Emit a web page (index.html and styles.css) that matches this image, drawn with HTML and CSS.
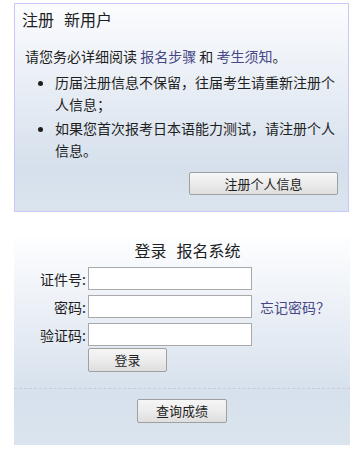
FILE: index.html
```html
<!DOCTYPE html>
<html lang="zh">
<head>
<meta charset="utf-8">
<link rel="stylesheet" href="styles.css">
</head>
<body>
<div class="page">
  <div class="reg-box">
    <h2 class="reg-title"><span class="gap">注册</span>新用户</h2>
    <p class="intro">请您务必详细阅读 <a class="link" href="#">报名步骤</a> 和 <a class="link" href="#">考生须知</a>。</p>
    <ul class="notes">
      <li>历届注册信息不保留，往届考生请重新注册个人信息；</li>
      <li>如果您首次报考日本语能力测试，请注册个人信息。</li>
    </ul>
    <div class="reg-actions">
      <button class="btn btn-reg" type="button">注册个人信息</button>
    </div>
  </div>

  <div class="login-box">
    <h2 class="login-title"><span class="gap">登录</span>报名系统</h2>
    <div class="form">
      <label class="lbl">证件号:</label>
      <input class="field" type="text">
      <span></span>
      <label class="lbl">密码:</label>
      <input class="field" type="password">
      <a class="link forgot" href="#">忘记密码？</a>
      <label class="lbl">验证码:</label>
      <input class="field" type="text">
      <span></span>
      <span></span>
      <div class="login-actions"><button class="btn btn-login" type="button">登录</button></div>
      <span></span>
    </div>
    <div class="divider"></div>
    <div class="query-actions">
      <button class="btn btn-query" type="button">查询成绩</button>
    </div>
  </div>
</div>
</body>
</html>
```
FILE: styles.css
```css
* { box-sizing: border-box; }
body {
  margin: 0;
  background: #fff;
  font-family: "Noto Sans CJK SC", "Noto Sans", "DejaVu Sans", sans-serif;
  font-size: 14px;
  color: #1e1e1e;
}
.page {
  padding: 3px 0 0 14px;
}
.reg-box {
  width: 335px;
  height: 209px;
  border: 1px solid #c8c8fb;
  background: linear-gradient(to bottom, #fbfcfe 0%, #e6ecf4 45%, #d5e0ec 80%, #dbe4ee 100%);
  padding: 0 0 0 10px;
}
.reg-title {
  margin: 4px 0 0 -3px;
  font-size: 16px;
  font-weight: normal;
  line-height: 22px;
  color: #1e1e1e;
}
.gap {
  margin-right: 10px;
}
.intro {
  margin: 15px 0 0;
  line-height: 22px;
}
.link {
  color: #474786;
  text-decoration: none;
}
.notes {
  margin: 4px 0 0;
  padding: 0 0 0 30px;
  line-height: 22px;
}
.notes li {
  margin: 0 0 2px;
  padding-left: 0;
}
.reg-actions {
  display: flex;
  justify-content: flex-end;
  padding-right: 10px;
  margin-top: 11px;
}
.btn {
  font-family: inherit;
  font-size: 13px;
  color: #1e1e1e;
  border: 1px solid #a0a0a0;
  border-radius: 2px;
  background: linear-gradient(to bottom, #f6f6f6 0%, #ececec 50%, #dedede 100%);
  padding: 0;
  line-height: 20px;
}
.btn-reg { width: 149px; height: 23px; }
.login-box {
  margin-top: 25px;
  width: 336px;
  height: 208px;
  background: linear-gradient(to bottom, #fdfeff 0%, #e6ecf4 45%, #d6e1ed 75%, #dbe4ee 100%);
  padding-top: 2px;
}
.login-title {
  margin: 0;
  font-size: 16px;
  font-weight: normal;
  line-height: 22px;
  text-align: center;
  padding-left: 11px;
}
.form {
  margin-top: 6px;
  display: grid;
  grid-template-columns: 74px 164px auto;
  row-gap: 5px;
  align-items: center;
}
.lbl {
  text-align: right;
  padding-right: 2px;
  line-height: 20px;
}
.field {
  width: 164px;
  height: 23px;
  border: 1px solid #a9a9a9;
  background: #fff;
  margin: 0;
}
.forgot {
  padding-left: 8px;
  line-height: 20px;
}
.login-actions {
  margin-top: -3px;
}
.btn-login { width: 79px; height: 24px; }
.divider {
  margin-top: 16px;
  border-top: 1px dashed #c8ccd2;
}
.query-actions {
  display: flex;
  justify-content: center;
  margin-top: 10px;
}
.btn-query { width: 90px; height: 24px; }
```
